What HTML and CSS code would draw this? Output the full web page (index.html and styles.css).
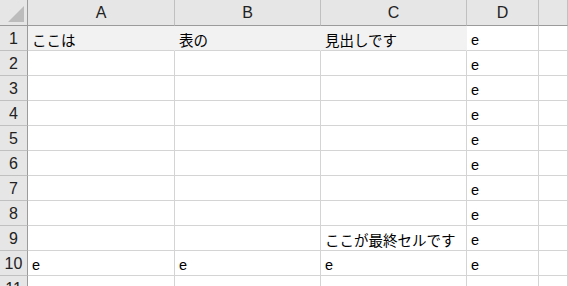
FILE: index.html
```html
<!DOCTYPE html>
<html lang="ja">
<head>
<meta charset="utf-8">
<link rel="stylesheet" href="styles.css">
</head>
<body>
<div class="sheet">
  <div class="corner hdr"><svg width="28" height="26" viewBox="0 0 28 26"><polygon points="8,22 24,22 24,6" fill="#bcbcbc"/></svg></div>
  <div class="colhdr hdr">A</div>
  <div class="colhdr hdr">B</div>
  <div class="colhdr hdr">C</div>
  <div class="colhdr hdr">D</div>
  <div class="colhdr hdr last"></div>

  <div class="rowhdr hdr">1</div>
  <div class="cell fill">ここは</div>
  <div class="cell fill">表の</div>
  <div class="cell fill">見出しです</div>
  <div class="cell">e</div>
  <div class="cell"></div>

  <div class="rowhdr hdr">2</div><div class="cell"></div><div class="cell"></div><div class="cell"></div><div class="cell">e</div><div class="cell"></div>
  <div class="rowhdr hdr">3</div><div class="cell"></div><div class="cell"></div><div class="cell"></div><div class="cell">e</div><div class="cell"></div>
  <div class="rowhdr hdr">4</div><div class="cell"></div><div class="cell"></div><div class="cell"></div><div class="cell">e</div><div class="cell"></div>
  <div class="rowhdr hdr">5</div><div class="cell"></div><div class="cell"></div><div class="cell"></div><div class="cell">e</div><div class="cell"></div>
  <div class="rowhdr hdr">6</div><div class="cell"></div><div class="cell"></div><div class="cell"></div><div class="cell">e</div><div class="cell"></div>
  <div class="rowhdr hdr">7</div><div class="cell"></div><div class="cell"></div><div class="cell"></div><div class="cell">e</div><div class="cell"></div>
  <div class="rowhdr hdr">8</div><div class="cell"></div><div class="cell"></div><div class="cell"></div><div class="cell">e</div><div class="cell"></div>
  <div class="rowhdr hdr">9</div><div class="cell"></div><div class="cell"></div><div class="cell">ここが最終セルです</div><div class="cell">e</div><div class="cell"></div>
  <div class="rowhdr hdr">10</div><div class="cell">e</div><div class="cell">e</div><div class="cell">e</div><div class="cell">e</div><div class="cell"></div>
  <div class="rowhdr hdr">11</div><div class="cell"></div><div class="cell"></div><div class="cell"></div><div class="cell"></div><div class="cell"></div>
</div>
</body>
</html>
```

FILE: styles.css
```css
html, body {
  margin: 0;
  padding: 0;
  background: #ffffff;
  overflow: hidden;
}
.sheet {
  display: grid;
  grid-template-columns: 28px 147px 146px 146px 72px 1fr;
  grid-template-rows: 26px repeat(11, 25px);
  width: 568px;
  height: 286px;
  overflow: hidden;
  font-family: "Liberation Sans", "Noto Sans CJK JP", sans-serif;
  font-size: 14.5px;
  color: #000;
}
.sheet > div {
  box-sizing: border-box;
  border-right: 1px solid #d4d4d4;
  border-bottom: 1px solid #d4d4d4;
  overflow: hidden;
  white-space: nowrap;
}
.hdr {
  background: #e6e6e6;
  color: #222222;
  display: flex;
  align-items: center;
  justify-content: center;
  font-size: 16px;
}
.sheet > .colhdr {
  border-right: 1px solid #c0c0c0;
  border-bottom: 1px solid #9b9b9b;
  padding-top: 1px;
}
.sheet > .corner {
  border-right: 1px solid #9b9b9b;
  border-bottom: 1px solid #9b9b9b;
  display: block;
}
.corner svg {
  display: block;
}
.sheet > .rowhdr {
  border-right: 1px solid #9b9b9b;
  border-bottom: 1px solid #c0c0c0;
  padding-top: 2px;
}
.cell {
  display: flex;
  align-items: center;
  padding: 3px 0 0 4px;
}
.sheet > .fill {
  background: #f2f2f2;
  border-right-color: #f2f2f2;
}
```
